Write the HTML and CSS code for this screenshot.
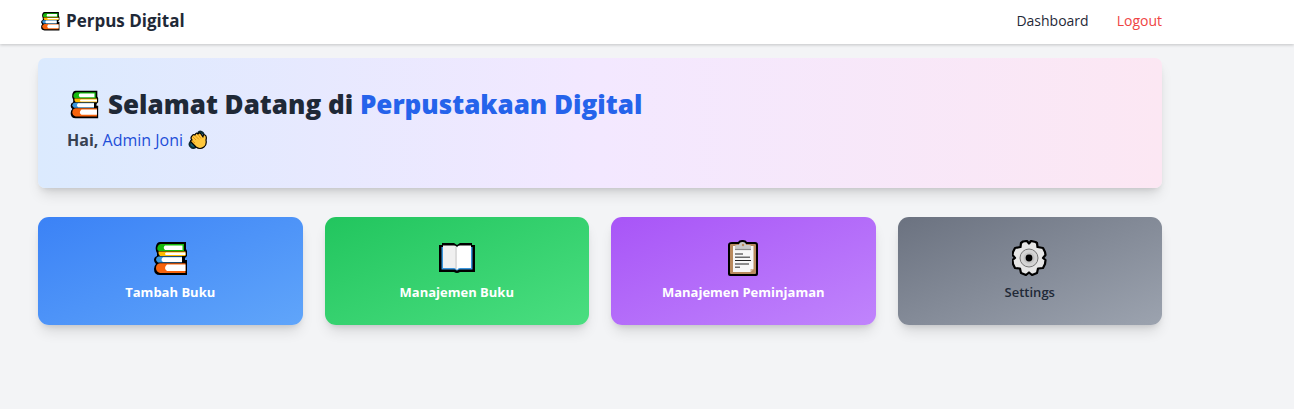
FILE: index.html
```html
<!DOCTYPE html>
<html lang="id">
<head>
<meta charset="utf-8">
<meta name="viewport" content="width=device-width, initial-scale=1">
<title>Perpus Digital</title>
<link rel="stylesheet" href="styles.css">
</head>
<body>
<svg class="sprite" aria-hidden="true">
  <symbol id="books" viewBox="-2 -2 36 36">
    <path d="M6 0H32V7L33 9V14L31 16V18H33V33H6Q0 33 0 27Q0 24 2 22Q0 20 0 18Q0 15 3 14V11Q1 8 2 4Q3 0 6 0Z" fill="#000"/>
    <path d="M7 2H30V9H5Q2.500 8 3.500 5Q4.500 2 7 2Z" fill="#16b90e"/>
    <path d="M11 3.500H28.500V8H11Q8.500 5.500 11 3.500Z" fill="#fff"/>
    <path d="M4.500 9.500H31.500V14H6Q4 12 4.500 9.500Z" fill="#ffb900"/>
    <path d="M12 10.500H31.500V13H12Q10 12 12 10.500Z" fill="#fff"/>
    <path d="M4.500 14.500H28V20.500H4Q2 19 2 17.500Q2 15 4.500 14.500Z" fill="#3a96dd"/>
    <path d="M9 15.200H28V20H9Q6 18 9 15.200Z" fill="#fff"/>
    <path d="M6 21.200H31.500V31H6Q2 30 2 26Q2 22 6 21.200Z" fill="#f7630c"/>
    <path d="M13 22.500H31.500V29H13Q9 26 13 22.500Z" fill="#fff"/>
  </symbol>
  <symbol id="open-book" viewBox="0 0 36 36">
    <path d="M3 3H15L18 5L21 3H33V5H36V32H21Q18 34 15 32H0V5H3Z" fill="#000"/>
    <path d="M2.500 7H33.500V29.500H20Q18 31.500 16 29.500H2.500Z" fill="#3a96dd"/>
    <path d="M4 5.500H15Q18 5.500 18 8V30Q17 28 15 28H4Z" fill="#f0f0f0"/>
    <path d="M32 5.500H21Q18 5.500 18 8V30Q19 28 21 28H32Z" fill="#fff"/>
    <path d="M16 6.500Q17 6 18 8V30Q18 28 16 28Z" fill="#dcdcdc"/>
  </symbol>
  <symbol id="clipboard" viewBox="0 0 36 36">
    <path d="M7 2H13Q14 0 17 0H18Q21 0 22 2H30Q33 2 33 5V34Q33 36 31 36H5Q3 36 3 34V5Q3 2 7 2Z" fill="#000"/>
    <rect x="5" y="4" width="26" height="30" rx="1" fill="#b98a5e"/>
    <path d="M8 6H28.500V29L25.500 32H8Z" fill="#f7f7f7"/>
    <path d="M25.500 32V29H28.500Z" fill="#d6b491"/>
    <path d="M10 9V6Q10 5 12 5H14Q14 2 17.500 2T21 5H24Q26 5 26 6V9Z" fill="#c9c9c9"/>
    <path d="M10 9.500H26" stroke="#8a8a8a" stroke-width="1.200"/>
    <circle cx="18" cy="5" r="1.200" fill="#b98a5e"/>
    <path d="M10 14H18M10 20.500H26" stroke="#222" stroke-width="1.200"/>
    <path d="M10 17.200H25M10 24H24M10 27.300H15" stroke="#6b6b6b" stroke-width="1.500"/>
  </symbol>
  <symbol id="gear" viewBox="1 0 36 36">
    <path d="M12 1.500L16 1L18 3.500L20 1L24.500 2L26 3L26.500 7L32 8L34 12L34.500 15L32 18L34.500 20L34 24L32 28L27 28.500L26 33L21 35L18 32.500L15 35L10 33L9 28.500L4 28L2 24L1.500 20L4 18L1.500 15L2 12L4 8L9.500 7L10 3Z" fill="#e6e6e6" stroke="#000" stroke-width="2.200" stroke-linejoin="round"/>
    <circle cx="18" cy="18" r="9" fill="#d4d4d4" stroke="#777" stroke-width="1"/>
    <circle cx="18" cy="18" r="5.500" fill="#c4c4c4"/>
    <circle cx="18" cy="18" r="3.400" fill="#000"/>
  </symbol>
  <symbol id="wave" viewBox="0 0 20 20">
    <path d="M10 3Q12 0 15 3L16 5M3 11Q0 15 3 17Q5 19 8 17" fill="#176073" stroke="#0b2830" stroke-width="2"/>
    <path d="M4 6Q5 4 7 5Q8 2 10 4Q12 2 13 4L15 7Q15 4 17 5Q19 6 18 10Q19 15 16 17Q12 20 8 17L3 12Q2 10 4 10Q2 8 4 6Z" fill="#ffc83d" stroke="#000" stroke-width="1.200" stroke-linejoin="round"/>
    <path d="M4.500 6.500L8 10M7 5.500L11 9.500M10 4.500L13 8.500M4 10.500L7 13" stroke="#d67d00" stroke-width=".7"/>
  </symbol>
</svg>
<header class="navbar">
  <div class="container navbar-inner">
    <a class="brand" href="#"><svg class="brand-icon" aria-hidden="true"><use href="#books"/></svg>Perpus Digital</a>
    <nav class="nav-links">
      <a href="#">Dashboard</a>
      <a class="logout" href="#">Logout</a>
    </nav>
  </div>
</header>
<main class="container">
  <section class="welcome">
    <h1><svg class="title-icon" aria-hidden="true"><use href="#books"/></svg><span>Selamat Datang di <span class="accent">Perpustakaan Digital</span></span></h1>
    <p class="greeting"><span><strong>Hai,</strong> <span class="user">Admin Joni</span></span><svg class="wave-icon" aria-hidden="true"><use href="#wave"/></svg></p>
  </section>
  <nav class="cards" aria-label="Menu">
    <a class="card blue" href="#"><svg class="card-icon" aria-hidden="true"><use href="#books"/></svg>Tambah Buku</a>
    <a class="card green" href="#"><svg class="card-icon" aria-hidden="true"><use href="#open-book"/></svg>Manajemen Buku</a>
    <a class="card purple" href="#"><svg class="card-icon" aria-hidden="true"><use href="#clipboard"/></svg>Manajemen Peminjaman</a>
    <a class="card gray" href="#"><svg class="card-icon" aria-hidden="true"><use href="#gear"/></svg>Settings</a>
  </nav>
</main>
</body>
</html>
```
FILE: styles.css
```css
* { box-sizing: border-box; }
body {
  margin: 0;
  min-height: 100vh;
  background: #f3f4f6;
  color: #1f2937;
  font-family: "Open Sans", "Noto Sans", sans-serif;
  font-size: 14px;
  line-height: 20px;
}
a { color: inherit; text-decoration: none; }
.sprite { position: absolute; width: 0; height: 0; }
.container { max-width: 1162px; padding-left: 38px; }
.navbar { background: #fff; box-shadow: 0 1px 3px rgba(0, 0, 0, .2); }
.navbar-inner {
  display: flex;
  align-items: center;
  justify-content: space-between;
  padding-top: 7px;
  padding-bottom: 9px;
}
.brand {
  display: flex;
  align-items: center;
  gap: 6px;
  padding-left: 2px;
  font-size: 17px;
  font-weight: 700;
  line-height: 28px;
}
.brand-icon { width: 20px; height: 20px; }
.nav-links { display: flex; gap: 28px; }
.logout { color: #ef4444; }
.welcome {
  margin: 14px 0 29px;
  padding: 28px 29px 37px;
  border-radius: 7px;
  background: linear-gradient(to right, #dbeafe, #f3e8ff, #fce7f3);
  box-shadow: 0 9px 14px -3px rgba(0, 0, 0, .12), 0 4px 6px -3px rgba(0, 0, 0, .12);
}
h1 {
  display: flex;
  align-items: center;
  gap: 9px;
  margin: 0 0 7px;
  padding-left: 2px;
  font-size: 26px;
  font-weight: 800;
  line-height: 36px;
}
.title-icon { width: 30px; height: 30px; }
.accent { color: #2563eb; }
.greeting {
  display: flex;
  align-items: center;
  gap: 5px;
  margin: 0;
  color: #374151;
  font-size: 16px;
  line-height: 22px;
}
.user { color: #1d4ed8; font-weight: 500; }
.wave-icon { width: 20px; height: 20px; }
.cards { display: grid; grid-template-columns: repeat(4, 1fr); gap: 22px; }
.card {
  display: flex;
  flex-direction: column;
  align-items: center;
  gap: 6px;
  padding: 23px 22px;
  border-radius: 11px;
  color: #fff;
  font-size: 13px;
  font-weight: 700;
  box-shadow: 0 9px 14px -3px rgba(0, 0, 0, .12), 0 4px 6px -3px rgba(0, 0, 0, .12);
}
.card-icon { width: 36px; height: 36px; }
.blue { background: linear-gradient(to bottom right, #3b82f6, #60a5fa); }
.green { background: linear-gradient(to bottom right, #22c55e, #4ade80); }
.purple { background: linear-gradient(to bottom right, #a855f7, #c084fc); }
.gray {
  background: linear-gradient(to bottom right, #6b7280, #9ca3af);
  color: #1f2937;
  font-weight: 600;
}
```
